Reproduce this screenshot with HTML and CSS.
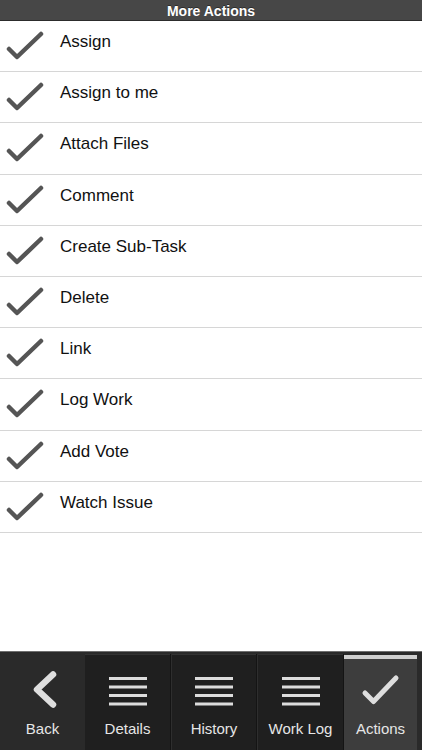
FILE: index.html
```html
<!DOCTYPE html>
<html>
<head>
<meta charset="utf-8">
<link rel="stylesheet" href="styles.css">
</head>
<body>
<div class="app">
  <header class="header">More Actions</header>
  <ul class="list">
    <li class="row"><svg class="check" viewBox="0 0 38 30"><polyline points="3,18 11,26 35,3"/></svg><span class="label">Assign</span></li>
    <li class="row"><svg class="check" viewBox="0 0 38 30"><polyline points="3,18 11,26 35,3"/></svg><span class="label">Assign to me</span></li>
    <li class="row"><svg class="check" viewBox="0 0 38 30"><polyline points="3,18 11,26 35,3"/></svg><span class="label">Attach Files</span></li>
    <li class="row"><svg class="check" viewBox="0 0 38 30"><polyline points="3,18 11,26 35,3"/></svg><span class="label">Comment</span></li>
    <li class="row"><svg class="check" viewBox="0 0 38 30"><polyline points="3,18 11,26 35,3"/></svg><span class="label">Create Sub-Task</span></li>
    <li class="row"><svg class="check" viewBox="0 0 38 30"><polyline points="3,18 11,26 35,3"/></svg><span class="label">Delete</span></li>
    <li class="row"><svg class="check" viewBox="0 0 38 30"><polyline points="3,18 11,26 35,3"/></svg><span class="label">Link</span></li>
    <li class="row"><svg class="check" viewBox="0 0 38 30"><polyline points="3,18 11,26 35,3"/></svg><span class="label">Log Work</span></li>
    <li class="row"><svg class="check" viewBox="0 0 38 30"><polyline points="3,18 11,26 35,3"/></svg><span class="label">Add Vote</span></li>
    <li class="row"><svg class="check" viewBox="0 0 38 30"><polyline points="3,18 11,26 35,3"/></svg><span class="label">Watch Issue</span></li>
  </ul>
  <nav class="tabbar">
    <div class="tab tab-back">
      <svg class="icon" viewBox="0 0 40 40"><polyline class="ico-stroke chevron" points="30,3.5 14,18.5 30,33.5"/></svg>
      <span class="tab-label">Back</span>
    </div>
    <div class="tab tab-tile w85">
      <svg class="icon" viewBox="0 0 40 40"><g class="bars"><rect x="1" y="6" width="38" height="3"/><rect x="1" y="14.5" width="38" height="3"/><rect x="1" y="23" width="38" height="3"/><rect x="1" y="31.5" width="38" height="3"/></g></svg>
      <span class="tab-label">Details</span>
    </div>
    <div class="gap"></div>
    <div class="tab tab-tile w84">
      <svg class="icon" viewBox="0 0 40 40"><g class="bars"><rect x="1" y="6" width="38" height="3"/><rect x="1" y="14.5" width="38" height="3"/><rect x="1" y="23" width="38" height="3"/><rect x="1" y="31.5" width="38" height="3"/></g></svg>
      <span class="tab-label">History</span>
    </div>
    <div class="gap"></div>
    <div class="tab tab-tile w85">
      <svg class="icon" viewBox="0 0 40 40"><g class="bars"><rect x="1" y="6" width="38" height="3"/><rect x="1" y="14.5" width="38" height="3"/><rect x="1" y="23" width="38" height="3"/><rect x="1" y="31.5" width="38" height="3"/></g></svg>
      <span class="tab-label">Work Log</span>
    </div>
    <div class="gap"></div>
    <div class="tab tab-active">
      <svg class="icon" viewBox="0 0 40 40"><polyline class="ico-stroke tick" points="4,22 12.5,30.5 35,7"/></svg>
      <span class="tab-label">Actions</span>
    </div>
  </nav>
</div>
</body>
</html>
```

FILE: styles.css
```css
* { box-sizing: border-box; }
html, body {
  margin: 0;
  padding: 0;
  background: #fff;
  font-family: "Liberation Sans", Arial, Helvetica, sans-serif;
}
.app {
  width: 422px;
  height: 750px;
  display: flex;
  flex-direction: column;
  overflow: hidden;
}
.header {
  height: 21px;
  flex: none;
  background: #474747;
  border-bottom: 1px solid #2c2c2c;
  color: #fff;
  font-weight: bold;
  font-size: 14px;
  text-align: center;
  padding-top: 2px;
  line-height: 18px;
  text-shadow: 0 -1px 0 rgba(0,0,0,0.4);
}
.list {
  list-style: none;
  margin: 0;
  padding: 0;
  flex: 1;
}
.row {
  height: 51.2px;
  border-bottom: 1px solid #d6d6d6;
  display: flex;
  align-items: center;
  padding-left: 6px;
}
.check {
  width: 38px;
  height: 30px;
  flex: none;
}
.check polyline {
  fill: none;
  stroke: #555;
  stroke-width: 4.5;
  stroke-linecap: round;
  stroke-linejoin: round;
}
.label {
  margin-left: 16px;
  font-size: 17px;
  color: #111;
  padding-bottom: 8px;
}
.tabbar {
  height: 99px;
  flex: none;
  background: #2a2a2a;
  border-top: 1px solid #6e6e6e;
  display: flex;
  padding-top: 1px;
  padding-right: 4px;
}
.tab {
  display: flex;
  flex-direction: column;
  align-items: center;
  padding-top: 18px;
}
.tab-back { width: 85px; }
.tab-tile {
  background: #1f1f1f;
  border-top: 1px solid #333;
  margin-top: 1px;
  padding-top: 16px;
}
.w85 { width: 85px; }
.w84 { width: 84px; }
.gap {
  width: 2px;
  background: #141414;
  border-right: 1px solid #2e2e2e;
  margin-top: 1px;
}
.tab-active {
  width: 73px;
  background: #3d3d3d;
  border-top: 4px solid #cfcfcf;
  margin-top: 2px;
  padding-top: 12px;
  margin-left: -1px;
}
.icon {
  width: 40px;
  height: 40px;
  flex: none;
}
.ico-stroke {
  fill: none;
  stroke: #dedede;
  stroke-linecap: round;
  stroke-linejoin: round;
}
.chevron { stroke-width: 6.5; }
.tick { stroke-width: 5; }
.bars rect { fill: #dcdcdc; }
.tab-label {
  margin-top: 9px;
  font-size: 15px;
  line-height: 18px;
  color: #e6e6e6;
  white-space: nowrap;
}
```
